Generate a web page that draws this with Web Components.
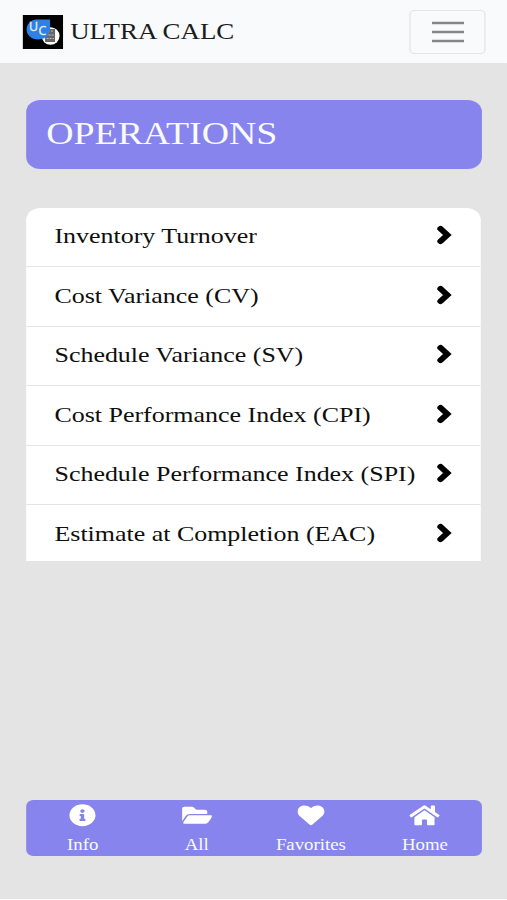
<!DOCTYPE html>
<html lang="en">
<head>
<meta charset="UTF-8">
<title>Ultra Calc</title>
<style>
    body {
        margin: 0;
        background-color: #e4e4e4;
        font-family: "Liberation Serif", "Times New Roman", serif;
        overflow: hidden;
    }
</style>
</head>
<body>
<calc-app>
    <nav-bar slot="nav">ULTRA CALC</nav-bar>
    <page-title>OPERATIONS</page-title>
    <operation-list>
        <operation-item>Inventory Turnover</operation-item>
        <operation-item>Cost Variance (CV)</operation-item>
        <operation-item>Schedule Variance (SV)</operation-item>
        <operation-item>Cost Performance Index (CPI)</operation-item>
        <operation-item>Schedule Performance Index (SPI)</operation-item>
        <operation-item>Estimate at Completion (EAC)</operation-item>
    </operation-list>
    <tab-bar slot="tabs">
        <tab-item icon="info">Info</tab-item>
        <tab-item icon="folder">All</tab-item>
        <tab-item icon="heart">Favorites</tab-item>
        <tab-item icon="home">Home</tab-item>
    </tab-bar>
</calc-app>

<script>
const icons = {
    info: {
        width: 512,
        path: "M256 8C119.043 8 8 119.083 8 256c0 136.997 111.043 248 248 248s248-111.003 248-248C504 119.083 392.957 8 256 8zm0 110c23.196 0 42 18.804 42 42s-18.804 42-42 42-42-18.804-42-42 18.804-42 42-42zm56 254c0 6.627-5.373 12-12 12h-88c-6.627 0-12-5.373-12-12v-24c0-6.627 5.373-12 12-12h12v-64h-12c-6.627 0-12-5.373-12-12v-24c0-6.627 5.373-12 12-12h64c6.627 0 12 5.373 12 12v100h12c6.627 0 12 5.373 12 12v24z"
    },
    folder: {
        width: 576,
        path: "M572.694 292.093L500.27 416.248A63.997 63.997 0 0 1 444.989 448H45.025c-18.523 0-30.064-20.093-20.731-36.093l72.424-124.155A64 64 0 0 1 152 256h399.964c18.523 0 30.064 20.093 20.73 36.093zM152 224h328v-48c0-26.51-21.49-48-48-48H272l-64-64H48C21.49 64 0 85.49 0 112v278.046l69.077-118.418C86.214 242.25 117.989 224 152 224z"
    },
    heart: {
        width: 512,
        path: "M462.3 62.6C407.5 15.9 326 24.3 275.7 76.2L256 96.5l-19.7-20.3C186.1 24.3 104.5 15.9 49.7 62.6c-62.8 53.6-66.1 149.8-9.9 207.9l193.5 199.8c12.5 12.9 32.8 12.9 45.3 0l193.5-199.8c56.3-58.1 53-154.3-9.8-207.9z"
    },
    home: {
        width: 576,
        path: "M280.37 148.26L96 300.11V464a16 16 0 0 0 16 16l112.06-.29a16 16 0 0 0 15.92-16V368a16 16 0 0 1 16-16h64a16 16 0 0 1 16 16v95.64a16 16 0 0 0 16 16.05L464 480a16 16 0 0 0 16-16V300L295.67 148.26a12.19 12.19 0 0 0-15.3 0zM571.6 251.47L488 182.56V44.05a12 12 0 0 0-12-12h-56a12 12 0 0 0-12 12v72.61L318.47 43a48 48 0 0 0-61 0L4.34 251.47a12 12 0 0 0-1.6 16.9l25.5 31A12 12 0 0 0 45.15 301l235.22-193.74a12.19 12.19 0 0 1 15.3 0L530.9 301a12 12 0 0 0 16.9-1.6l25.5-31a12 12 0 0 0-1.7-16.93z"
    }
};

class CalcApp extends HTMLElement {

    constructor() {
        super();
        this.attachShadow({mode: "open"}).innerHTML = `
           <style>
               :host {
                   display: flex;
                   flex-direction: column;
                   box-sizing: border-box;
                   width: 426.05px;
                   height: 900px;
                   transform: scaleX(1.19);
                   transform-origin: 0 0;
                   background-color: #e4e4e4;
                   border-bottom: 1px solid #fafafa;
               }

               main {
                   flex: 1;
                   display: flex;
                   flex-direction: column;
                   gap: 39px;
                   padding: 37px 21px 0 21.6px;
               }

               footer {
                   padding: 0 21px 43px 21.6px;
               }
           </style>
           <slot name="nav"></slot>
           <main><slot></slot></main>
           <footer><slot name="tabs"></slot></footer>`;
    }
}

class NavBar extends HTMLElement {

    constructor() {
        super();
        this.attachShadow({mode: "open"}).innerHTML = `
           <style>
               :host {
                   display: flex;
                   align-items: center;
                   justify-content: space-between;
                   box-sizing: border-box;
                   height: 63px;
                   padding: 0 18px 0 19px;
                   background-color: #f8fafb;
                   color: #1c1c1c;
               }

               .brand {
                   display: flex;
                   align-items: center;
                   gap: 5.6px;
                   font-size: 22.6px;
                   line-height: 34px;
               }

               .brand svg {
                   display: block;
                   width: 34.4px;
                   height: 34px;
               }

               .brand span {
                   padding-top: 1px;
               }

               button {
                   display: flex;
                   align-items: center;
                   justify-content: center;
                   box-sizing: border-box;
                   width: 63.6px;
                   height: 44px;
                   padding: 0;
                   border: 1px solid #e2e4e5;
                   border-radius: 4px;
                   background: none;
               }
           </style>
           <div class="brand">
               <svg viewBox="0 0 41 34" preserveAspectRatio="none" font-family="Open Sans, sans-serif" fill="#e4f1ff">
                   <rect width="41" height="34" fill="#000"/>
                   <ellipse cx="28" cy="21" rx="9" ry="8.7" fill="#fff"/>
                   <path d="M14 4.5H27.5V14.5C27.5 20.5 22 24.5 15.5 24.5C8.5 24.5 4 20 4 14.5C4 9 8.5 4.500 14 4.5Z" fill="#2f80e4"/>
                   <path d="M27.5 14H32.5V27H22.500V22.5C25 21 27 18 27.500 14Z" fill="#666"/>
                   <path d="M28.500 16H31.500M26 20H31.500M24 23.500H31.500" stroke="#bbb" stroke-width="1.1" stroke-dasharray="2 1"/>
                   <text x="6.500" y="15.8" font-size="12.5" stroke="#e4f1ff" stroke-width=".3">U</text>
                   <text x="16" y="20.500" font-size="12.5" stroke="#e4f1ff" stroke-width=".3">C</text>
               </svg>
               <span><slot></slot></span>
           </div>
           <button aria-label="Menu">
               <svg width="27.4" height="22" viewBox="0 0 27.4 22"><path d="M0 2H27.4M0 11H27.4M0 20H27.4" stroke="#858687" stroke-width="2.4"/></svg>
           </button>`;
    }
}

class PageTitle extends HTMLElement {

    constructor() {
        super();
        this.attachShadow({mode: "open"}).innerHTML = `
           <style>
               :host {
                   display: block;
                   box-sizing: border-box;
                   height: 68.5px;
                   padding-left: 17.2px;
                   border-radius: 12px;
                   background-color: #8784ed;
                   color: #f8fbff;
                   font-size: 31.8px;
                   line-height: 67px;
               }
           </style>
           <slot></slot>`;
    }
}

class OperationList extends HTMLElement {

    constructor() {
        super();
        this.attachShadow({mode: "open"}).innerHTML = `
           <style>
               :host {
                   display: block;
                   box-sizing: border-box;
                   height: 353.5px;
                   margin: 0 .6px;
                   border-radius: 12px 12px 0 0;
                   background-color: white;
                   overflow: hidden;
               }
           </style>
           <slot></slot>`;
    }
}

class OperationItem extends HTMLElement {

    constructor() {
        super();
        this.attachShadow({mode: "open"}).innerHTML = `
           <style>
               :host {
                   display: flex;
                   align-items: center;
                   justify-content: space-between;
                   box-sizing: border-box;
                   height: 59.55px;
                   padding: 0 24.3px 0 23.6px;
                   border-bottom: 1.5px solid #e4e4e4;
                   color: #0e0e0e;
                   font-size: 21.8px;
                   white-space: nowrap;
               }

               svg {
                   display: block;
                   width: 13px;
                   height: 20px;
                   margin-bottom: 3.4px;
               }
           </style>
           <span><slot></slot></span>
           <svg viewBox="0 0 13 20"><path d="M3.2 3.7L8.9 10L3.2 16.3" fill="none" stroke="#000" stroke-width="5.4" stroke-linecap="round"/></svg>`;
    }
}

class TabBar extends HTMLElement {

    constructor() {
        super();
        this.attachShadow({mode: "open"}).innerHTML = `
           <style>
               :host {
                   display: flex;
                   height: 56px;
                   border-radius: 6px;
                   background-color: #8784ed;
                   color: #f8fbff;
               }
           </style>
           <slot></slot>`;
    }
}

class TabItem extends HTMLElement {

    connectedCallback() {
        const icon = icons[this.getAttribute("icon")];
        this.attachShadow({mode: "open"}).innerHTML = `
           <style>
               :host {
                   flex: 1 1 0;
                   display: flex;
                   flex-direction: column;
                   align-items: center;
                   gap: 8px;
                   padding-top: 4.4px;
                   font-size: 15.8px;
                   line-height: 20px;
               }

               svg {
                   display: block;
                   height: 22.6px;
                   fill: white;
               }
           </style>
           <svg viewBox="0 0 ${icon.width} 512"><path d="${icon.path}"/></svg>
           <span><slot></slot></span>`;
    }
}

customElements.define("calc-app", CalcApp);
customElements.define("nav-bar", NavBar);
customElements.define("page-title", PageTitle);
customElements.define("operation-list", OperationList);
customElements.define("operation-item", OperationItem);
customElements.define("tab-bar", TabBar);
customElements.define("tab-item", TabItem);
</script>
</body>
</html>
